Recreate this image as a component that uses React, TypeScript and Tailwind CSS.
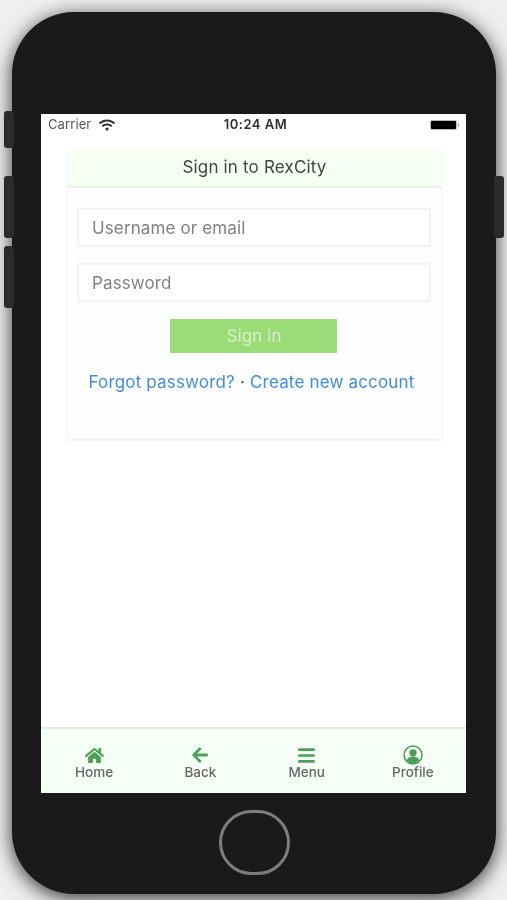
import { FaArrowLeft, FaBars, FaHome, FaWifi } from "react-icons/fa";
import type { IconType } from "react-icons";

function ProfileIcon({ className }: { className?: string }) {
  return (
    <svg viewBox="0 0 24 24" className={className} fill="currentColor">
      <circle cx="12" cy="12" r="10.8" fill="none" stroke="currentColor" strokeWidth="1.8" />
      <circle cx="12" cy="9.4" r="4.4" />
      <path d="M4.6 18.2c1-3.1 3.6-4.3 7.4-4.3s6.4 1.2 7.4 4.3A10 10 0 0 1 12 22a10 10 0 0 1-7.4-3.8z" />
    </svg>
  );
}

const tabs: { label: string; icon: IconType | typeof ProfileIcon; size: string }[] = [
  { label: "Home", icon: FaHome, size: "h-[19px] w-[19px]" },
  { label: "Back", icon: FaArrowLeft, size: "h-[18px] w-[18px]" },
  { label: "Menu", icon: FaBars, size: "h-[19px] w-[19px]" },
  { label: "Profile", icon: ProfileIcon, size: "h-[20px] w-[20px]" },
];

function SideButton({ className }: { className: string }) {
  return <div className={`absolute w-[10px] rounded-[3px] bg-[#2b2b2b] ${className}`} />;
}

function StatusBar() {
  return (
    <div className="flex h-[21px] shrink-0 items-center justify-between pl-[7px] pr-[7px] text-[13px] leading-none">
      <div className="flex w-[114px] items-center gap-[8px] text-[#555555]">
        <span className="tracking-[0.1px]">Carrier</span>
        <FaWifi className="h-[14px] w-[16px] text-[#333333]" />
      </div>
      <span className="font-semibold tracking-[0.5px] text-[#2f2f2f]">10:24 AM</span>
      <div className="flex w-[110px] items-center justify-end">
        <div className="h-[10px] w-[27px] rounded-[2px] border border-[#bbbbbb] bg-black" />
        <div className="ml-px h-[4px] w-[1px] bg-[#aaaaaa]" />
      </div>
    </div>
  );
}

function Field({ placeholder }: { placeholder: string }) {
  return (
    <div className="flex h-[39px] items-center border-2 border-[#f2f2f2] bg-white pl-[13px] pt-[2px] text-[17px] tracking-[0.12px] text-[#808080]">
      {placeholder}
    </div>
  );
}

function SignInCard() {
  return (
    <div className="ml-[27px] mr-[25px] mt-[14px] flex h-[290px] flex-col bg-[#fefefe] shadow-[0_1px_3px_rgba(0,0,0,0.1)]">
      <div className="flex h-[39px] shrink-0 items-center justify-center border-b-2 border-[#e9f3e8] bg-[#f5fff2] text-[17px] tracking-[0.17px] text-[#444444]">
        Sign in to RexCity
      </div>
      <div className="flex flex-col gap-[16px] pl-[9px] pr-[10px] pt-[20px]">
        <Field placeholder="Username or email" />
        <Field placeholder="Password" />
      </div>
      <div className="ml-[102px] mt-[17px] flex h-[34px] w-[167px] items-center justify-center bg-[#9bdc78] pl-[1px] pt-[2px] text-[17px] tracking-[0.1px] text-[#d6f0c4]">
        Sign in
      </div>
      <div className="mt-[18px] flex justify-center pr-[6px] text-[17px] leading-[22px] tracking-[0.17px] text-[#3f8ddc]">
        <span>Forgot password?</span>
        <span className="mx-[5px] text-[#555555]">·</span>
        <span>Create new account</span>
      </div>
    </div>
  );
}

function TabBar() {
  return (
    <div className="mt-auto grid h-[66px] shrink-0 grid-cols-4 border-t-2 border-[#dff0da] bg-[#f6fff5] pt-[16px]">
      {tabs.map(({ label, icon: Icon, size }) => (
        <div key={label} className="flex flex-col items-center">
          <div className="flex h-[20px] items-center">
            <Icon className={`${size} text-[#4c9e58]`} />
          </div>
          <span className="text-[13.5px] font-medium leading-[15px] text-[#666666]">{label}</span>
        </div>
      ))}
    </div>
  );
}

export default function App() {
  return (
    <div className="h-[900px] w-[507px] overflow-hidden bg-[#efefef] pl-[12px] pt-[12px] font-['Inter',_sans-serif]">
      <div className="relative flex h-[882px] w-[484px] flex-col items-center rounded-[62px] bg-[#1a1a1a] shadow-[0_4px_20px_rgba(0,0,0,0.8)]">
        <SideButton className="-left-[8px] top-[99px] h-[37px]" />
        <SideButton className="-left-[8px] top-[164px] h-[62px]" />
        <SideButton className="-left-[8px] top-[234px] h-[62px]" />
        <SideButton className="-right-[8px] top-[164px] h-[62px]" />
        <div className="ml-[-1px] mt-[102px] flex h-[679px] w-[425px] flex-col bg-white blur-[0.5px]">
          <StatusBar />
          <SignInCard />
          <TabBar />
        </div>
        <div className="mt-[17px] h-[65px] w-[71px] rounded-full border-[3px] border-[#7d7d7d]" />
      </div>
    </div>
  );
}
